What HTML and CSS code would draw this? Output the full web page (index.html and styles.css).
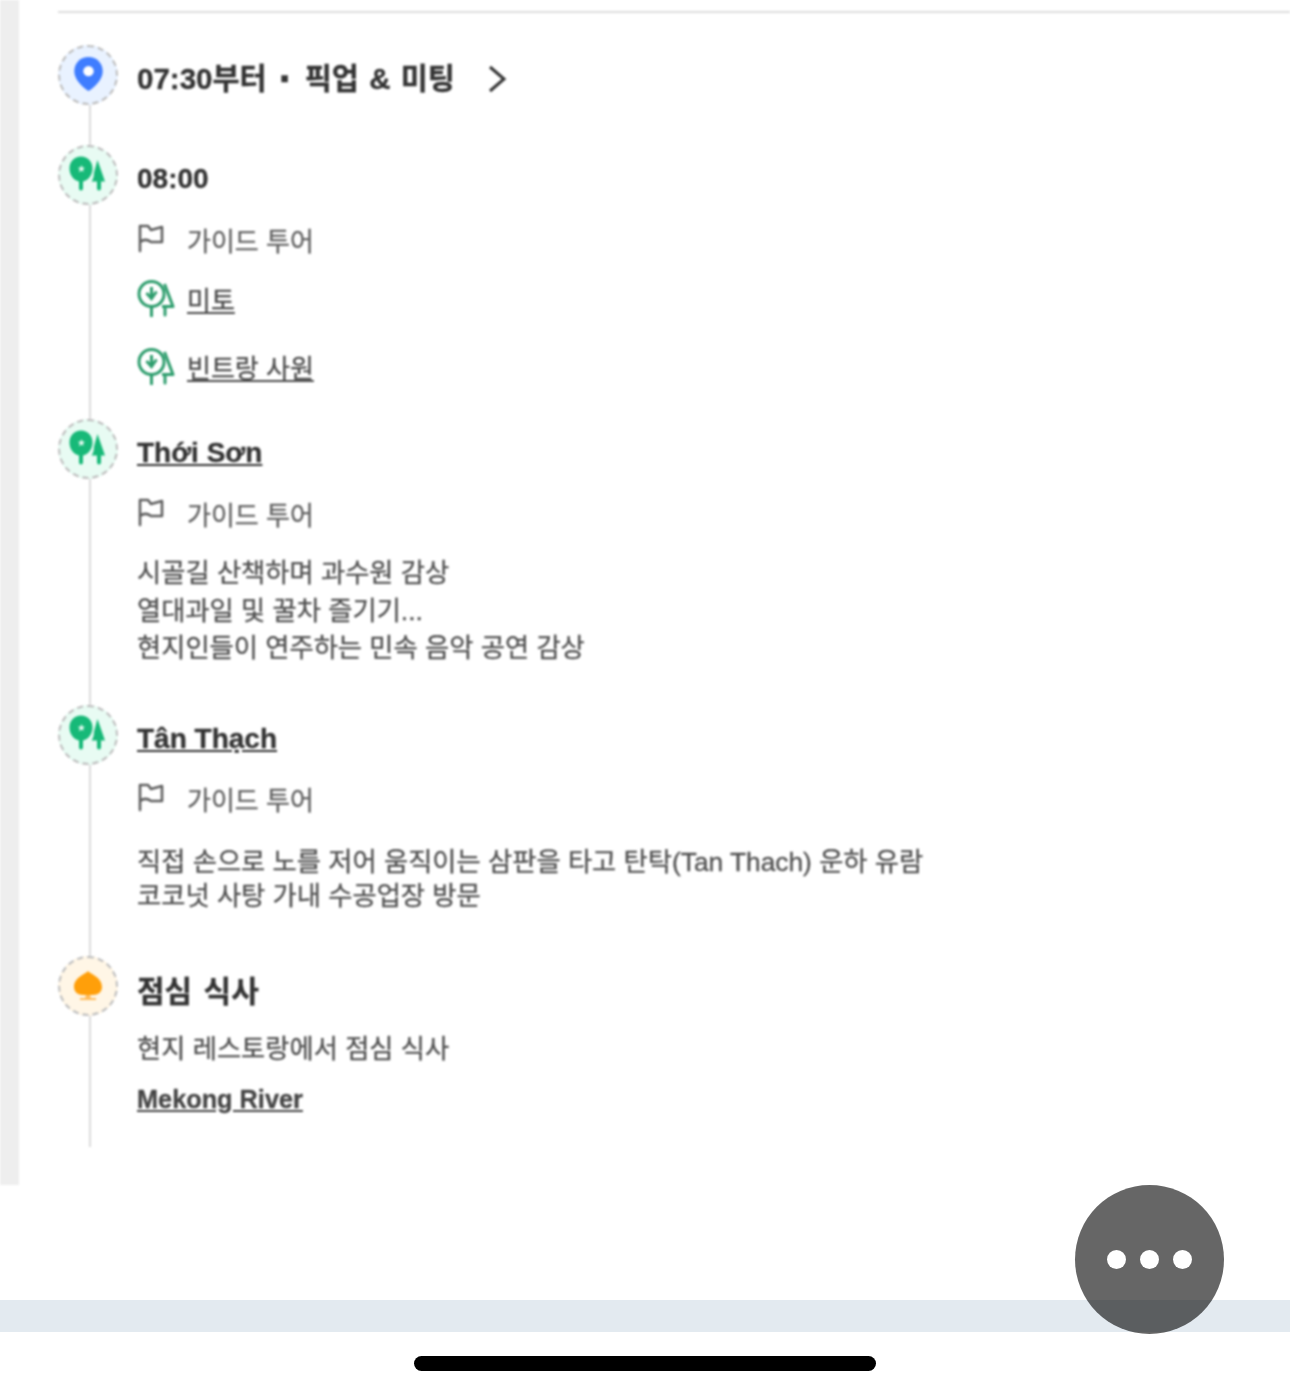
FILE: index.html
```html
<!DOCTYPE html>
<html lang="ko">
<head>
<meta charset="utf-8">
<title>투어 일정</title>
<link rel="stylesheet" href="styles.css">
</head>
<body>
<svg class="defs" width="0" height="0" aria-hidden="true">
  <symbol id="trees" viewBox="0 0 36 36">
    <path fill-rule="evenodd" d="M12 0.500C5.300 0.500 0.500 5.800 0.500 12.500c0 6 3.500 10.800 8 12.500l1.500.500v7a2 2 0 0 0 4 0v-7l1.500-.500c4.500-1.700 8-6.500 8-12.500C23.500 5.800 18.700 0.500 12 0.500zm0.500 8.500l1 2.500 2.500.3-2 1.700.7 2.600-2.200-1.500-2.500 2 .8-3-2-1.800 2.700-.3z"/>
    <path d="M28.500 4L36 25.500H32v7a2 2 0 0 1-4 0v-7h-5.500c1.800-2 2.500-6 2.500-9z"/>
  </symbol>
  <symbol id="trees-line" viewBox="0 0 38 38">
    <circle cx="14.500" cy="15" r="12.500" fill="none" stroke="currentColor" stroke-width="3"/>
    <path d="M14.500 28v9M28 28v8" fill="none" stroke="currentColor" stroke-width="3" stroke-linecap="round"/>
    <path d="M27.500 5L36 27.500H25" fill="none" stroke="currentColor" stroke-width="3" stroke-linejoin="round"/>
    <path d="M14.500 8v12M9.500 14l5 5.500 5-7" fill="none" stroke="currentColor" stroke-width="3"/>
  </symbol>
  <symbol id="flag" viewBox="0 0 28 30">
    <path d="M3 28V3h8l3 4 11-3v15H14c-4-3-7-3-11 0" fill="none" stroke="currentColor" stroke-width="2.600" stroke-linejoin="round" stroke-linecap="round"/>
  </symbol>
</svg>

<div class="page">
  <div class="main">
    <div class="strip"></div>
    <div class="content">
      <hr class="divider">
      <div class="timeline">
        <div class="line"></div>

        <section class="item item-pickup">
          <div class="dot dot-blue">
            <svg class="ico-pin" viewBox="0 0 32 38"><path d="M16 1C7.500 1 1 7.500 1 16c0 9 8.500 16.500 15 21 6.500-4.500 15-12 15-21C31 7.500 24.500 1 16 1z"/><circle class="hole" cx="16" cy="16" r="5.500"/></svg>
          </div>
          <div class="body">
            <div class="title title-row">
              <span>07:30부터</span><span class="sep">·</span><span class="wide">픽업 &amp; 미팅</span>
              <svg class="chev" viewBox="0 0 20 28"><path d="M3 2l14 12L3 26" fill="none" stroke="currentColor" stroke-width="3"/></svg>
            </div>
          </div>
        </section>

        <section class="item item-a">
          <div class="dot dot-green"><svg class="ico-trees"><use href="#trees"/></svg></div>
          <div class="body">
            <div class="title">08:00</div>
            <div class="row row-flag"><svg class="ico-flag"><use href="#flag"/></svg><span>가이드 투어</span></div>
            <div class="row row-link row-first"><svg class="ico-line"><use href="#trees-line"/></svg><a href="#">미토</a></div>
            <div class="row row-link row-next"><svg class="ico-line"><use href="#trees-line"/></svg><a href="#">빈트랑 사원</a></div>
          </div>
        </section>

        <section class="item item-b">
          <div class="dot dot-green"><svg class="ico-trees"><use href="#trees"/></svg></div>
          <div class="body">
            <div class="title"><a href="#">Thới Sơn</a></div>
            <div class="row row-flag"><svg class="ico-flag"><use href="#flag"/></svg><span>가이드 투어</span></div>
            <p class="desc desc-loose">시골길 산책하며 과수원 감상<br>열대과일 및 꿀차 즐기기...<br>현지인들이 연주하는 민속 음악 공연 감상</p>
          </div>
        </section>

        <section class="item item-c">
          <div class="dot dot-green"><svg class="ico-trees"><use href="#trees"/></svg></div>
          <div class="body">
            <div class="title"><a href="#">Tân Thạch</a></div>
            <div class="row row-flag"><svg class="ico-flag"><use href="#flag"/></svg><span>가이드 투어</span></div>
            <p class="desc desc-tight">직접 손으로 노를 저어 움직이는 삼판을 타고 탄탁(Tan Thach) 운하 유람<br>코코넛 사탕 가내 수공업장 방문</p>
          </div>
        </section>

        <section class="item item-d">
          <div class="dot dot-orange">
            <svg class="ico-food" viewBox="0 0 30 32"><path d="M15 1C13 4 1 7 1 17c0 5 4 8 9 8h10c5 0 9-3 9-8C29 7 17 4 15 1z"/><path class="base" d="M13 25h4l1 3h5v2H7v-2h5z"/></svg>
          </div>
          <div class="body">
            <div class="title title-ko">점심 식사</div>
            <p class="desc desc-single">현지 레스토랑에서 점심 식사</p>
            <div class="place"><a href="#">Mekong River</a></div>
          </div>
        </section>
      </div>
    </div>
  </div>

  <div class="footer">
    <div class="band"></div>
    <div class="home-wrap"><div class="home"></div></div>
  </div>

  <button class="fab" type="button" aria-label="더보기"><i></i><i></i><i></i></button>
</div>
</body>
</html>
```
FILE: styles.css
```css
* { box-sizing: border-box; }
html, body { margin: 0; padding: 0; background: #fff; }
body {
  font-family: "Liberation Sans", "Noto Sans CJK KR", sans-serif;
  color: #333;
  overflow: hidden;
}
.defs { position: absolute; }
.page { position: relative; width: 1290px; height: 1395px; overflow: hidden; }

.main { display: flex; height: 1185px; filter: blur(1px); -webkit-text-stroke: 0.3px currentColor; }
.strip { width: 19px; background: #eeeeee; flex: none; }
.content { flex: 1; padding: 11px 0 0 39px; }
.divider { border: 0; height: 2px; margin: 0; background: #dedede; }

.timeline { position: relative; padding-top: 32px; }
.line {
  position: absolute;
  left: 31px;
  top: 92px;
  height: 1042px;
  width: 2px;
  background: #dcdcdc;
}

.item { position: relative; display: grid; grid-template-columns: 60px 1fr; column-gap: 19px; }
.item-a { margin-top: 40px; }
.item-b { margin-top: 35px; }
.item-c { margin-top: 37px; }
.item-d { margin-top: 43px; }

.dot {
  width: 60px;
  height: 60px;
  border-radius: 50%;
  border: 2px dashed #bcbcbc;
  display: flex;
  align-items: center;
  justify-content: center;
}
.dot-blue { background: #e9f2ff; }
.dot-green { background: #e8fbf3; }
.dot-orange { background: #fff6e6; }

.ico-pin { width: 31px; height: 36px; fill: #3f7dff; margin-top: -2px; }
.hole { fill: #fff; }
.ico-trees { width: 36px; height: 36px; fill: #17b978; margin: -3px 0 0 -2px; }
.ico-food { width: 30px; height: 32px; fill: #ff9f0a; margin-top: 1px; }
.base { fill: #ffbc5c; }

.body { padding-top: 16px; min-width: 0; }
.title { font-size: 28px; font-weight: 700; line-height: 36px; color: #333; }
.title-row { display: flex; align-items: center; font-size: 29.500px; }
.wide { word-spacing: 2px; }
.sep { width: 38px; text-align: center; font-size: 44px; line-height: 0; }
.chev { width: 20px; height: 28px; color: #333; margin-left: 32px; flex: none; }
.title-ko { font-size: 30px; word-spacing: 3px; padding-top: 2px; }
.title a, .place a, .row a { color: inherit; text-decoration: underline; }

.row { display: flex; align-items: center; height: 36px; font-size: 26px; }
.row-flag { margin-top: 24px; color: #5f5f5f; }
.row-first { margin-top: 23px; }
.row-next { margin-top: 32px; }
.row-link { color: #4a4a4a; }
.ico-flag { width: 28px; height: 30px; color: #5f5f5f; margin: -3px 22px 0 0; flex: none; }
.ico-line { width: 38px; height: 38px; color: #2f9e6e; margin-right: 12px; flex: none; }

.desc { margin: 0; font-size: 26.300px; color: #4f4f4f; }
.desc-loose { margin-top: 24px; line-height: 37.500px; }
.desc-tight { margin-top: 28px; line-height: 34px; }
.desc-single { margin-top: 22px; line-height: 34px; }
.place { margin-top: 15px; font-size: 25.300px; font-weight: 700; line-height: 36px; color: #444; }

.footer { height: 210px; display: flex; flex-direction: column; }
.band { margin-top: 115px; height: 32px; background: #e3eaf0; }
.home-wrap { display: flex; justify-content: center; padding-top: 24px; }
.home { width: 462px; height: 15px; border-radius: 8px; background: #000; }

.fab {
  position: absolute;
  left: 1075px;
  top: 1185px;
  width: 149px;
  height: 149px;
  padding: 0;
  border: 0;
  border-radius: 50%;
  background: rgba(0, 0, 0, 0.6);
  display: flex;
  align-items: center;
  justify-content: center;
  gap: 14px;
}
.fab i { width: 19px; height: 19px; border-radius: 50%; background: #fff; filter: blur(0.6px); }
```
